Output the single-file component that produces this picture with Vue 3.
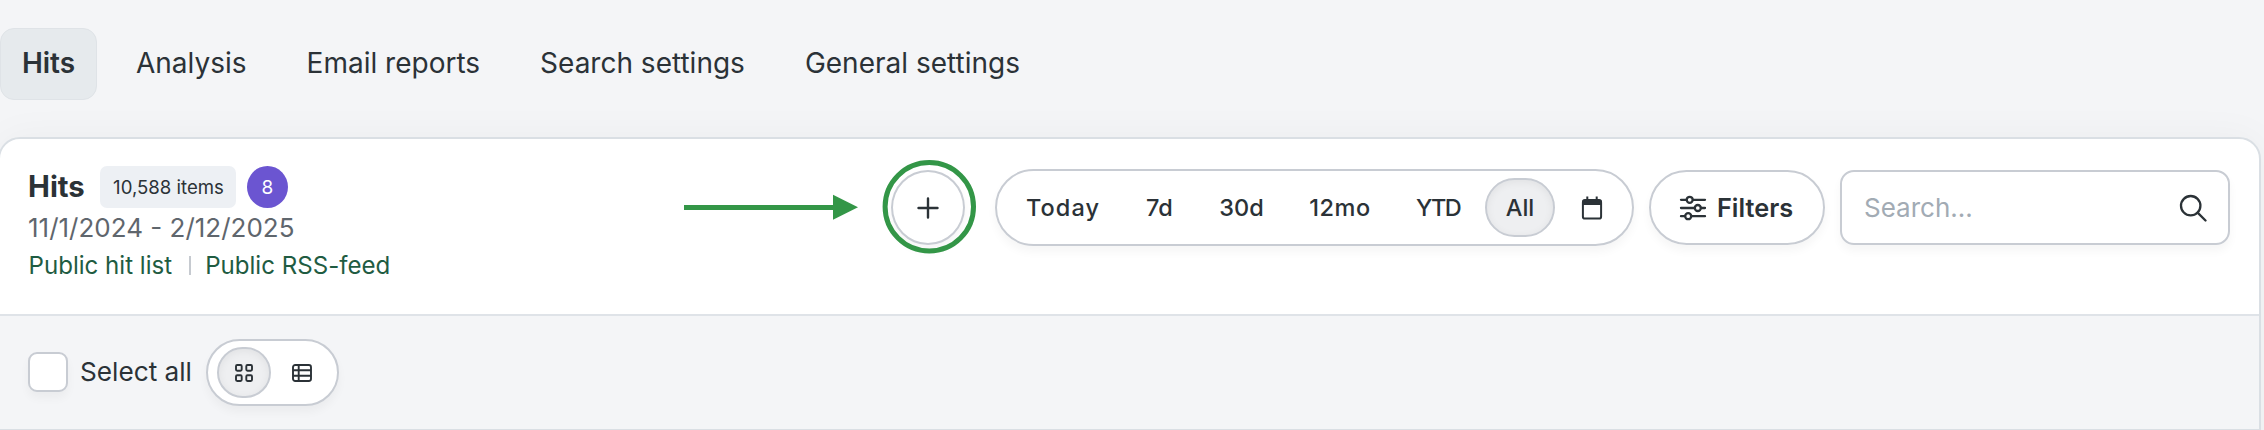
<script setup>
import { ref } from 'vue';

const tabs = ['Hits', 'Analysis', 'Email reports', 'Search settings', 'General settings'];
const activeTab = ref('Hits');

const ranges = [
  { label: 'Today', cls: 'today' },
  { label: '7d', cls: 'week' },
  { label: '30d', cls: 'month' },
  { label: '12mo', cls: 'year' },
  { label: 'YTD', cls: 'ytd' },
  { label: 'All', cls: 'all' },
];
const range = ref('All');
const view = ref('grid');
const search = ref('');
</script>

<template>
  <div class="page">
    <nav class="tabs">
      <button v-for="tab in tabs" :key="tab" class="tab" :class="{ active: activeTab === tab }" @click="activeTab = tab">{{ tab }}</button>
    </nav>

    <section class="card">
      <header class="head">
        <div class="info">
          <div class="title">
            <h1>Hits</h1>
            <span class="items">10,588 items</span>
            <span class="count">8</span>
          </div>
          <div class="dates">11/1/2024 - 2/12/2025</div>
          <div class="links">
            <a>Public hit list</a>
            <i></i>
            <a>Public RSS-feed</a>
          </div>
        </div>

        <div class="tools">
          <div class="add">
            <button class="plus">
              <svg width="22" height="22" viewBox="0 0 22 22"><path d="M11 1.5v19M1.5 11h19" /></svg>
            </button>
            <svg class="pointer" width="294" height="96" viewBox="0 0 294 96">
              <path d="M0 48.5h152" stroke="#339647" stroke-width="5" />
              <path d="M149 35.7L174 48.2L149 60.7z" fill="#339647" />
              <circle cx="245.3" cy="47.8" r="44.2" fill="none" stroke="#339647" stroke-width="5" />
            </svg>
          </div>

          <div class="ranges">
            <button v-for="r in ranges" :key="r.label" :class="[r.cls, { active: range === r.label }]" @click="range = r.label">{{ r.label }}</button>
            <button class="calendar">
              <svg width="22" height="24" viewBox="0 0 22 24">
                <rect x="1.9" y="4.4" width="18.2" height="18.2" rx="2.2" fill="none" stroke="#2b3237" stroke-width="2" />
                <path d="M1 9V6a3 3 0 0 1 3-3h14a3 3 0 0 1 3 3v3z" fill="#2b3237" />
                <path d="M6.3 .5v4M15.7 .5v4" stroke="#2b3237" stroke-width="2" />
              </svg>
            </button>
          </div>

          <button class="filters">
            <svg width="28" height="26" viewBox="0 0 28 26">
              <path d="M2 4.8h5.4M14 4.8h12M2 13h13.5M22 13h4M2 21.2h4M12.5 21.2h13.5" />
              <circle cx="10.7" cy="4.8" r="3" />
              <circle cx="18.8" cy="13" r="3" />
              <circle cx="9.2" cy="21.2" r="3" />
            </svg>
            <span>Filters</span>
          </button>

          <label class="search">
            <input v-model="search" type="text" placeholder="Search..." />
            <svg width="28" height="28" viewBox="0 0 28 28">
              <circle cx="11.7" cy="11.7" r="9.7" />
              <path d="M18.6 18.6L26.5 26.5" />
            </svg>
          </label>
        </div>
      </header>

      <div class="bar">
        <span class="check"></span>
        <span class="select">Select all</span>
        <div class="views">
          <button :class="{ active: view === 'grid' }" @click="view = 'grid'">
            <svg width="18" height="18" viewBox="0 0 18 18">
              <rect x="1" y="1" width="5.7" height="5.7" rx="1.2" />
              <rect x="11.3" y="1" width="5.7" height="5.7" rx="1.2" />
              <rect x="1" y="11.3" width="5.7" height="5.7" rx="1.2" />
              <rect x="11.3" y="11.3" width="5.7" height="5.7" rx="1.2" />
            </svg>
          </button>
          <button :class="{ active: view === 'table' }" @click="view = 'table'">
            <svg width="20" height="18" viewBox="0 0 20 18">
              <rect x="1" y="1" width="18" height="16" rx="2.2" />
              <path d="M1 6.3h18M1 11.7h18M6.7 1v16" />
            </svg>
          </button>
        </div>
      </div>
    </section>
  </div>
</template>

<style>
body{
  background-color: #f4f5f7;
}
</style>

<style scoped>
*{
  box-sizing: border-box;
  margin: 0;
  padding: 0;
}
.page{
  width: 100%;
  height: 430px;
  overflow: hidden;
  padding-top: 28px;
  background-color: #f4f5f7;
  color: #2b3237;
  font-family: Inter, "Liberation Sans", sans-serif;
}
button{
  border: none;
  background: none;
  font-family: inherit;
  color: inherit;
  white-space: nowrap;
}
svg{
  display: block;
  flex-shrink: 0;
}
.tabs{
  display: flex;
  gap: 18px;
  height: 72px;
}
.tab{
  height: 72px;
  padding: 0 20px 2px;
  border: 1px solid transparent;
  border-radius: 14px;
  font-size: 28px;
  line-height: 68px;
}
.tab.active{
  width: 97px;
  background-color: #e6eaed;
  border-color: #dfe3e7;
  font-weight: 600;
}
.card{
  width: 2263px;
  height: 320px;
  margin-top: 37px;
  margin-left: -2px;
  border: 2px solid #dadfe4;
  border-radius: 22px 22px 0 0;
  background-color: #fff;
  overflow: hidden;
  box-shadow: 0 0 40px rgba(0, 0, 0, 0.04);
}
.head{
  display: flex;
  justify-content: space-between;
  height: 177px;
  padding: 27px 29px 0 28px;
  border-bottom: 2px solid #dfe3e8;
}
.title{
  display: flex;
  align-items: center;
  height: 42px;
}
h1{
  width: 72px;
  font-size: 29.3px;
  font-weight: 700;
  line-height: 42px;
}
.items{
  width: 136px;
  height: 42px;
  padding-left: 1px;
  border-radius: 7px;
  background-color: #edf0f4;
  font-size: 18.6px;
  line-height: 43px;
  text-align: center;
}
.count{
  width: 41px;
  height: 42px;
  margin-left: 11px;
  border-radius: 50%;
  background-color: #6b55d1;
  color: #fff;
  font-size: 19px;
  line-height: 43px;
  text-align: center;
}
.dates{
  height: 38px;
  font-size: 26px;
  line-height: 39px;
  color: #5f666d;
}
.links{
  display: flex;
  align-items: center;
  height: 38px;
  padding-left: 0.5px;
  font-size: 24.1px;
  color: #1f5c42;
}
.links i{
  width: 2px;
  height: 19px;
  margin: 0 14px 0 17px;
  background-color: #c6cad0;
}
.tools{
  display: flex;
  align-items: flex-start;
  padding-top: 3px;
}
.add{
  position: relative;
  margin-top: 1px;
  margin-right: 30px;
}
.plus{
  display: flex;
  align-items: center;
  justify-content: center;
  width: 74px;
  height: 75px;
  border: 2px solid #c8ccd3;
  border-radius: 50%;
  background-color: #fff;
  box-shadow: 0 6px 10px rgba(0, 0, 0, 0.04);
}
.plus svg{
  fill: none;
  stroke: #2b3237;
  stroke-width: 2.4;
  stroke-linecap: round;
}
.pointer{
  position: absolute;
  left: -207px;
  top: -11px;
  pointer-events: none;
}
.ranges{
  display: flex;
  gap: 5px;
  width: 639px;
  height: 77px;
  margin-right: 15px;
  padding: 7px 9px;
  border: 2px solid #c8ccd3;
  border-radius: 39px;
  box-shadow: 0 6px 10px rgba(0, 0, 0, 0.04);
}
.ranges button{
  display: flex;
  align-items: center;
  justify-content: center;
  height: 59px;
  border: 2px solid transparent;
  border-radius: 30px;
  font-size: 23.5px;
  font-weight: 500;
}
.ranges .today{
  width: 114px;
  letter-spacing: 1.1px;
}
.ranges .week{
  width: 69px;
}
.ranges .month{
  width: 85px;
}
.ranges .year{
  width: 102px;
  letter-spacing: 0.5px;
}
.ranges .ytd{
  width: 84px;
  letter-spacing: -1.6px;
}
.ranges .all{
  width: 70px;
}
.ranges .calendar{
  width: 63px;
}
.ranges .active, .views .active{
  background-color: #eeeff1;
  border-color: #c8ccd3;
  box-shadow: inset 0 2px 8px rgba(0, 0, 0, 0.06);
}
.filters{
  display: flex;
  align-items: center;
  gap: 10px;
  width: 176px;
  height: 75px;
  margin-top: 1px;
  margin-right: 15px;
  padding-left: 28px;
  border: 2px solid #c8ccd3;
  border-radius: 38px;
  font-size: 25.3px;
  font-weight: 600;
  box-shadow: 0 6px 10px rgba(0, 0, 0, 0.04);
}
.filters svg, .search svg{
  fill: none;
  stroke: #2b3237;
  stroke-width: 2.3;
  stroke-linecap: round;
}
.search{
  display: flex;
  align-items: center;
  width: 390px;
  height: 75px;
  margin-top: 1px;
  padding: 0 21px 0 22px;
  border: 2px solid #c8ccd3;
  border-radius: 14px;
  box-shadow: 0 6px 10px rgba(0, 0, 0, 0.04);
}
.search input{
  flex: 1;
  min-width: 0;
  border: none;
  outline: none;
  background: none;
  font-family: inherit;
  font-size: 26px;
}
.search input::placeholder{
  color: #a2abb4;
}
.bar{
  display: flex;
  align-items: center;
  height: 115px;
  padding: 0 28px;
  border-bottom: 2px solid #dadfe4;
  background-color: #f4f5f7;
}
.check{
  width: 40px;
  height: 40px;
  margin-bottom: 1px;
  border: 2px solid #c8ccd3;
  border-radius: 9px;
  background-color: #fff;
  box-shadow: 0 6px 10px rgba(0, 0, 0, 0.04);
}
.select{
  width: 126px;
  margin-left: 12px;
  padding-bottom: 3px;
  font-size: 26.2px;
  white-space: nowrap;
}
.views{
  display: flex;
  gap: 4px;
  width: 133px;
  height: 67px;
  padding: 6px 8px 6px 9px;
  border: 2px solid #c8ccd3;
  border-radius: 34px;
  background-color: #fff;
  box-shadow: 0 6px 10px rgba(0, 0, 0, 0.04);
}
.views button{
  display: flex;
  align-items: center;
  justify-content: center;
  width: 54px;
  height: 51px;
  border: 2px solid transparent;
  border-radius: 27px;
}
.views svg{
  fill: none;
  stroke: #2b3237;
  stroke-width: 1.9;
}
</style>
